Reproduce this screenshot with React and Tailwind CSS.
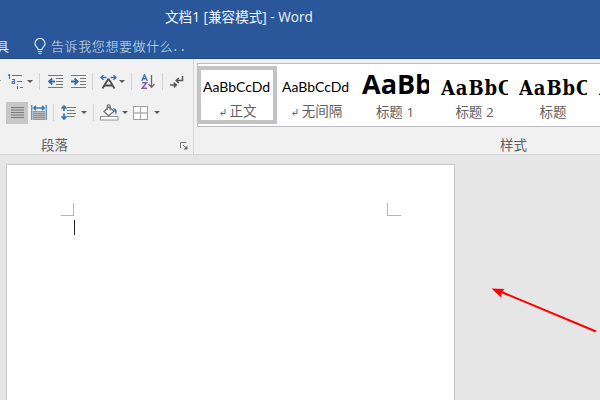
import React from 'react';

const cjk = "font-['Open_Sans','Noto_Sans_CJK_SC',sans-serif]";
const cjkOnly = "font-['Noto_Sans_CJK_SC',sans-serif]";
const bodySample = "h-[28px] pb-[3px] text-[14px] leading-[17px] font-['Lato',sans-serif]";
const serifSample =
  "h-[36px] text-[20px] leading-[28px] tracking-[0.9px] font-bold font-['DejaVu_Serif_Condensed','DejaVu_Serif',serif]";

const Icon = ({ w, h, className = '', children }) => (
  <svg width={w} height={h} viewBox={`0 0 ${w} ${h}`} fill="none" className={`block shrink-0 ${className}`}>
    {children}
  </svg>
);

const Caret = ({ className }) => (
  <Icon w={6} h={3} className={className}>
    <path d="M0 0H6L3 3Z" fill="#595959" />
  </Icon>
);

const Divider = ({ className }) => <div className={`h-[17px] w-px shrink-0 bg-[#d2d2d2] ${className}`} />;

const lines = 'stroke-[#787878]';

function Multilevel() {
  return (
    <Icon w={17} h={15} className="ml-[6px]">
      <path d="M1 1.5L2.5 .5V5" stroke="#3d76b5" strokeWidth="1.2" />
      <path d="M5 5.500H7.500V9.500H5.200V7.500H7.500" stroke="#3d76b5" strokeWidth="1.1" />
      <path d="M10.5 10V10.8M10.5 12V15" stroke="#3d76b5" strokeWidth="1.2" />
      <path d="M5 1.5H15M10 7.5H15M13 13.5H16" stroke="#707070" strokeWidth="1.2" />
    </Icon>
  );
}

function Indent({ right, className }) {
  return (
    <Icon w={16} h={13} className={className}>
      <path className={lines} d={right ? 'M0 .5H15M9 3.5H15M9 6.5H15M9 9.5H15M0 12.5H15' : 'M0 .5H15M8 3.5H15M8 6.5H15M8 9.5H15M0 12.5H15'} />
      <path
        d={right ? 'M0 6.5H6M3.5 3.5L6.7 6.5L3.5 9.5' : 'M7 6.5H1.5M4.2 3.5L1 6.5L4.2 9.5'}
        stroke="#2f6cb3"
        strokeWidth="1.8"
      />
    </Icon>
  );
}

function CharScale() {
  return (
    <Icon w={17} h={14} className="ml-[7px]">
      <path d="M1 2.500H6.500M3.500 .3L1 2.500L3.500 4.700M10.500 2.500H16M13.500 .3L16 2.500L13.500 4.700" stroke="#3274ba" strokeWidth="1.5" />
      <path d="M2.500 13.500L8 4.500H9L14.500 13.500M4.500 10.500H12.500" stroke="#505050" strokeWidth="1.8" />
    </Icon>
  );
}

function Sort() {
  return (
    <Icon w={14} h={15} className="ml-[9px]">
      <path d="M.7 7L3.5 .8L6.3 7M1.7 4.8H5.3" stroke="#3975b8" strokeWidth="1.4" />
      <path d="M1.2 8.8H5.6L1.2 14.2H6" stroke="#8a57b0" strokeWidth="1.4" />
      <path d="M10.5 1V13M7.5 10L10.5 13.3L13.5 10" stroke="#686868" strokeWidth="1.3" />
    </Icon>
  );
}

function ShowMarks() {
  return (
    <Icon w={14} h={12} className="ml-[7px]">
      <path d="M12.5 0V4.5H6.5M8.8 2L6.2 4.5L8.8 7" stroke="#555" strokeWidth="1.5" />
      <path d="M0 9H6M3.8 6.6L6.3 9L3.8 11.4" stroke="#555" strokeWidth="1.5" />
    </Icon>
  );
}

function Distributed() {
  return (
    <Icon w={16} h={15} className="ml-[3px]">
      <path d="M.8 0V15M15.2 0V15" stroke="#3274ba" strokeWidth="1.1" />
      <path d="M2.5 3H13.5M5 .8L2.7 3L5 5.2M11 .8L13.3 3L11 5.2" stroke="#3274ba" strokeWidth="1.4" />
      <path d="M2 6.5H14V14.5H2Z" fill="#b5b5b5" />
      <path d="M2 6.5H14M2 8.5H14M2 10.5H14M2 12.5H14M2 14.5H14" stroke="#8a8a8a" strokeWidth=".8" />
    </Icon>
  );
}

function LineSpacing() {
  return (
    <Icon w={15} h={15} className="ml-[7px]">
      <path d="M3 1V6M.5 3.6L3 1L5.5 3.6M3 8.5V14M.5 11.4L3 14L5.5 11.4" stroke="#3274ba" strokeWidth="1.7" />
      <path d="M6 2.5H15M6 5.5H13.5M6 8.5H15M6 11.5H13.5" stroke="#777" strokeWidth="1.2" />
    </Icon>
  );
}

function Bucket() {
  return (
    <Icon w={19} h={17} className="ml-[6px]">
      <path d="M4 7.5L9 2.7L14 7.2L8.7 11.7Z" fill="#fafafa" stroke="#696969" strokeWidth="1.2" />
      <path d="M7.2 6V2C7.2 .3 10.2 .3 10.2 2V6.5" stroke="#696969" strokeWidth="1.1" />
      <path d="M12.8 4.2C16.5 4 17.8 7 15.8 11.2C15.5 8.6 15 7.3 12.8 4.2Z" fill="#3274ba" />
      <rect x=".5" y="12.5" width="17.5" height="3.5" fill="#fff" stroke="#929292" />
    </Icon>
  );
}

function Borders() {
  return (
    <Icon w={15} h={14} className="ml-[5px]">
      <rect x=".5" y=".5" width="14" height="13" fill="#fff" stroke="#a0a0a0" />
      <path d="M7.5 1V13M1 7H14" stroke="#b0b0b0" strokeWidth="1.3" />
    </Icon>
  );
}

const ReturnMark = () => (
  <Icon w={6} h={7} className="mr-[4px] mt-[2px]">
    <path d="M5 0V4.5H1M2.8 2.5L.8 4.5L2.8 6.5" stroke="#666" strokeWidth="1" />
  </Icon>
);

function Style({ className, sample, sampleClass, label, mark, labelClass = '' }) {
  return (
    <div className={`flex shrink-0 flex-col ${className}`}>
      <div className={`flex items-end overflow-hidden whitespace-nowrap text-black ${sampleClass}`}>{sample}</div>
      <div className={`flex h-[18px] items-center justify-center whitespace-nowrap text-[13.5px] leading-[18px] text-[#606060] ${cjk} ${labelClass}`}>
        {mark && <ReturnMark />}
        {label}
      </div>
    </div>
  );
}

export default function App() {
  return (
    <div className="relative flex h-[400px] w-[600px] flex-col overflow-hidden bg-[#e6e6e6]">
      <header className="flex h-[59px] shrink-0 flex-col border-b border-[#214c8c] bg-[#2a579a]">
        <div className={`flex h-[34px] items-center pl-[165px] text-[13.6px] leading-none whitespace-pre text-[#f3f6fb] ${cjk}`}>
          文档1 [兼容模式] - Word
        </div>
        <div className={`flex h-[24px] items-center whitespace-nowrap text-[#e2eaf5] ${cjkOnly}`}>
          <span className="-ml-[4px] w-[14px] text-[13px] leading-[20px]">具</span>
          <Icon w={12} h={17} className="ml-[24px]">
            <path d="M4 11.5C4 9.5 1 8.5 1 5.5A5 5 0 0 1 11 5.5C11 8.5 8 9.5 8 11.5Z" stroke="#dce5f2" strokeWidth="1.2" />
            <path d="M4 13.5H8M4.5 15.5H7.5" stroke="#dce5f2" strokeWidth="1.2" />
          </Icon>
          <span className="-mt-px ml-[5px] text-[13px] leading-[20px] font-light tracking-[0.6px] text-[#d5e0f0]">告诉我您想要做什么</span>
          <span className="-mt-px text-[13px] leading-[20px] tracking-[4px] text-[#d5e0f0]">..</span>
        </div>
      </header>

      <div className="flex h-[96px] shrink-0 border-b border-[#d3d3d3] bg-[#f1f1f1]">
        <section className="flex w-[193px] shrink-0 flex-col pt-[7px]">
          <div className="flex h-[31px] items-center">
            <Caret className="-ml-[5px]" />
            <Multilevel />
            <Caret className="ml-[3px]" />
            <Divider className="ml-[6px]" />
            <Indent className="ml-[8px]" />
            <Indent right className="ml-[7px]" />
            <Divider className="ml-[5px]" />
            <CharScale />
            <Caret className="ml-[2px]" />
            <Divider className="ml-[6px]" />
            <Sort />
            <Divider className="ml-[7px]" />
            <ShowMarks />
          </div>
          <div className="flex h-[31px] items-center">
            <div className="ml-[6px] flex h-[22px] w-[22px] shrink-0 items-center justify-center bg-[#c6c6c6]">
              <Icon w={13} h={11}>
                <path d="M0 .5H13M0 3H13M0 5.5H13M0 8H13M0 10.5H13" stroke="#777" />
              </Icon>
            </div>
            <Distributed />
            <Divider className="ml-[6px]" />
            <LineSpacing />
            <Caret className="ml-[5px]" />
            <Divider className="ml-[6px]" />
            <Bucket />
            <Caret className="ml-[3px]" />
            <Borders />
            <Caret className="ml-[6px]" />
          </div>
          <div className="flex h-[26px] items-center justify-between pr-[5px] pl-[41px]">
            <span className={`pt-[8px] text-[13.5px] leading-none text-[#606060] ${cjkOnly}`}>段落</span>
            <Icon w={8} h={8} className="mt-[10px]">
              <path d="M.5 6V.5H6.5M3 3L6 6" stroke="#777" />
              <path d="M7.5 3.5V7.5H3.5Z" fill="#666" />
            </Icon>
          </div>
        </section>

        <section className="flex min-w-0 grow flex-col border-l border-[#d5d5d5] pt-[4px] pl-[3px]">
          <div className="flex h-[64px] shrink-0 overflow-hidden border border-r-0 border-[#bcbcc4] bg-white pt-[2px]">
            <Style
              className="-ml-px h-[58px] w-[80px] border-4 border-[#c3c3c3] pl-[2px]"
              sample="AaBbCcDd"
              sampleClass={bodySample}
              label="正文"
              labelClass="mt-[4px]"
              mark
            />
            <Style
              className="ml-[5px] w-[70px] pt-[4px]"
              sample="AaBbCcDd"
              sampleClass={bodySample}
              label="无间隔"
              labelClass="mt-[4px]"
              mark
            />
            <Style
              className="ml-[10px] w-[67px]"
              sample="AaBb"
              sampleClass="h-[35px] text-[27px] leading-[34px] font-bold font-['Open_Sans',sans-serif]"
              label="标题 1"
              labelClass="-ml-px mt-[2px]"
            />
            <Style
              className="ml-[12px] w-[67px]"
              sample="AaBbC"
              sampleClass={serifSample}
              label="标题 2"
              labelClass="mt-[1px]"
            />
            <Style
              className="ml-[11px] w-[68px]"
              sample="AaBbC"
              sampleClass={serifSample}
              label="标题"
              labelClass="mt-[1px]"
            />
            <Style className="ml-[12px] w-[68px]" sample="AaBbC" sampleClass={serifSample} label="" />
          </div>
          <div className={`pt-[11px] pl-[303px] text-[13.5px] leading-none text-[#606060] ${cjkOnly}`}>样式</div>
        </section>
      </div>

      <main className="flex grow pt-[9px] pl-[6px]">
        <div className="flex w-[449px] items-start justify-between border border-b-0 border-[#c8c8c8] bg-white pt-[38px] pr-[53px] pl-[54px]">
          <div className="flex flex-col items-end">
            <div className="h-[13px] w-[13px] border-r border-b border-[#b5b5b5]" />
            <div className="-mr-px mt-[4px] h-[15px] w-px bg-[#222]" />
          </div>
          <div className="h-[13px] w-[14px] border-b border-l border-[#b5b5b5]" />
        </div>
      </main>

      <svg className="absolute top-[280px] left-[485px]" width="115" height="60" viewBox="0 0 115 60">
        <path d="M14 11L111 51.5" stroke="#fe0000" strokeWidth="2" />
        <path d="M6.5 8.5L19.5 9L16.5 12.3L16 17.5Z" fill="#fe0000" />
      </svg>
    </div>
  );
}
